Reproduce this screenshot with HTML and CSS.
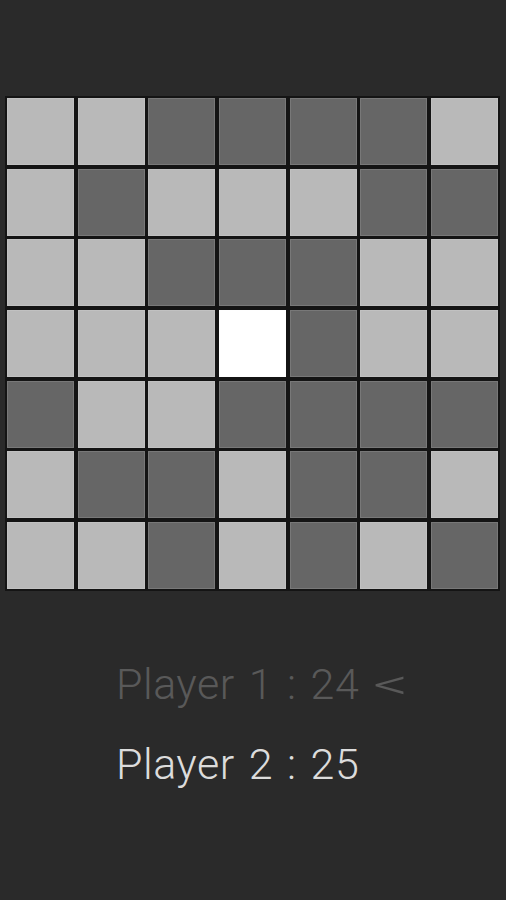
FILE: index.html
```html
<!DOCTYPE html>
<html>
<head>
    <title>board</title>
    <link rel="stylesheet" href="styles.css">
</head>
<body>
    <div class="board" id="board"></div>

    <div class="scores">
        <p class="score idle">Player 1 : 24 <span class="turn">&lt;</span></p>
        <p class="score active">Player 2 : 25</p>
    </div>
<script>
    // L = light, D = dark, W = selected
    var rows = [
        'LLDDDDL',
        'LDLLLDD',
        'LLDDDLL',
        'LLLWDLL',
        'DLLDDDD',
        'LDDLDDL',
        'LLDLDLD'
    ];
    var board = document.getElementById('board');
    var names = {L: 'light', D: 'dark', W: 'white'};
    for (var i = 0; i < rows.length; i++) {
        for (var j = 0; j < rows[i].length; j++) {
            var cell = document.createElement('div');
            cell.className = 'cell ' + names[rows[i][j]];
            board.appendChild(cell);
        }
    }
</script>
</body>
</html>
```

FILE: styles.css
```css
*{padding: 0;margin: 0;}
body{
    background: #2a2a2a;
    font-family: Roboto, "Liberation Sans", sans-serif;
}
.board{
    display: grid;
    grid-template-columns: repeat(7, 67px);
    grid-auto-rows: 67px;
    gap: 3.67px;
    padding: 98px 0 0 7px;
}
.cell{
    box-shadow: 0 0 0 2px #141414;
    border: 1px solid rgba(255,255,255,0.12);
}
.light{background: #b9b9b9;}
.dark{background: #666666;}
.white{background: #ffffff;}
.scores{
    padding: 55px 0 0 116px;
}
.score{
    font-size: 43px;
    font-weight: 300;
    line-height: 80px;
    letter-spacing: 0.5px;
    word-spacing: 3px;
}
.turn{
    display: inline-block;
    transform: scaleX(1.6);
    transform-origin: left center;
}
.idle{color: #595959;}
.active{color: #dcdcdc;}
```
